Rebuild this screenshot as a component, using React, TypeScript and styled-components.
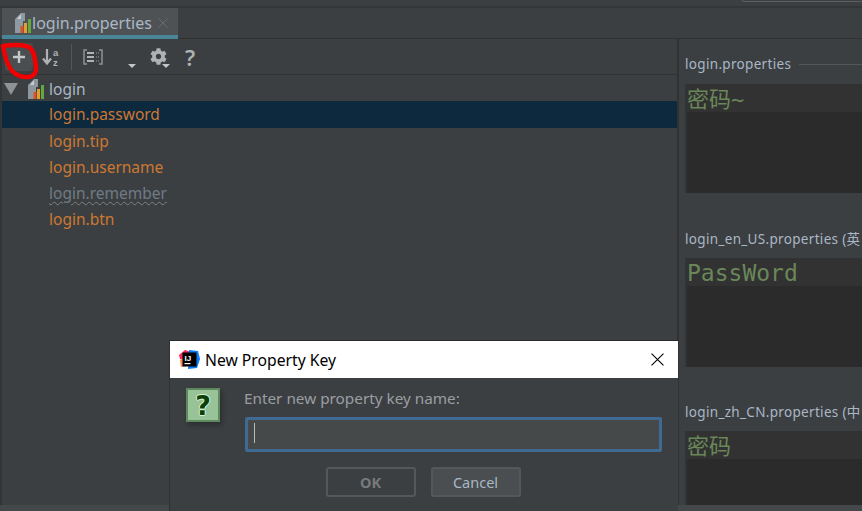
import React from "react";
import styled, { createGlobalStyle } from "styled-components";
import { FaCog } from "react-icons/fa";

const uiFont = `"Noto Sans", "Noto Sans CJK SC", sans-serif`;

const GlobalStyle = createGlobalStyle`
  html, body {
    margin: 0;
    padding: 0;
    background: #3c3f41;
  }
  * {
    box-sizing: border-box;
  }
`;

const Screen = styled.div`
  position: relative;
  width: 862px;
  height: 511px;
  overflow: hidden;
  display: flex;
  flex-direction: column;
  background: #3c3f41;
  font-family: ${uiFont};
`;

// top strip + tabs
const TopBar = styled.div`
  height: 8px;
  flex: none;
  display: flex;
  justify-content: flex-end;
  border-bottom: 2px solid #343638;
`;

const SearchStub = styled.div`
  width: 120px;
  height: 2px;
  border-left: 1px solid #5e6060;
  border-bottom: 1px solid #5e6060;
  border-bottom-left-radius: 2px;
`;

const TabBar = styled.div`
  height: 31px;
  flex: none;
  display: flex;
  padding-left: 2px;
  border-bottom: 1px solid #323232;
`;

const Tab = styled.div`
  width: 176px;
  height: 31px;
  display: flex;
  align-items: center;
  padding: 3px 8px 0 12px;
  background: #4e5254;
  border-bottom: 4px solid #4a8497;
  color: #a9b7c6;
  font-size: 16px;
`;

const TabClose = styled.svg<{ $left: number }>`
  margin-left: ${(p) => p.$left}px;
  flex: none;
`;

// main area
const Main = styled.div`
  flex: 1;
  min-height: 0;
  display: flex;
`;

const LeftPanel = styled.div`
  width: 679px;
  flex: none;
  padding-left: 2px;
  background: #323537;
  border-right: 2px solid #323232;
`;

const LeftInner = styled.div`
  height: 100%;
  background: #3c3f41;
`;

const Toolbar = styled.div`
  height: 36px;
  display: flex;
  align-items: center;
  padding-left: 3px;
  border-bottom: 1px solid #323232;
`;

const ToolButton = styled.div<{ $left?: number; $active?: boolean }>`
  position: relative;
  width: 28px;
  height: 28px;
  margin-left: ${(p) => p.$left ?? 0}px;
  display: flex;
  align-items: center;
  justify-content: center;
  border-radius: 4px;
  color: #afb1b3;
  background: ${(p) => (p.$active ? "#4a4e50" : "transparent")};
`;

const ToolSeparator = styled.div`
  width: 1px;
  height: 26px;
  margin-left: 5px;
  background: #515658;
`;

const SmallCaret = styled.div<{ $bare?: boolean }>`
  width: 0;
  height: 0;
  border-left: 4px solid transparent;
  border-right: 4px solid transparent;
  border-top: 4px solid #c4c6c8;
  ${(p) =>
    p.$bare
      ? `margin: 18px 0 0 21px;`
      : `position: absolute; right: 2px; bottom: 3px;`}
`;

const HelpMark = styled.span`
  font-size: 22px;
  font-weight: 600;
  line-height: 1;
  color: #afb1b3;
`;

const TreeRow = styled.div<{ $selected?: boolean }>`
  height: 26.25px;
  display: flex;
  align-items: center;
  padding-left: 47px;
  font-size: 15.5px;
  background: ${(p) => (p.$selected ? "#0d293e" : "transparent")};
`;

const RootRow = styled(TreeRow)`
  padding-left: 2px;
  padding-top: 1px;
`;

const Disclosure = styled.div`
  width: 0;
  height: 0;
  margin-right: 9px;
  border-left: 7.5px solid transparent;
  border-right: 7.5px solid transparent;
  border-top: 12px solid #8f9294;
`;

const RootLabel = styled.span`
  margin-left: 4px;
  color: #a9b7c6;
`;

const KeyLabel = styled.span<{ $unused?: boolean }>`
  color: ${(p) => (p.$unused ? "#6f7b85" : "#cc7832")};
  ${(p) =>
    p.$unused &&
    `text-decoration: underline wavy #808080 1px;
     text-underline-offset: 2px;`}
`;

const RightPanel = styled.div`
  flex: 1;
  min-width: 0;
  padding: 15px 0 0 6px;
  display: flex;
  flex-direction: column;
`;

const SectionLabel = styled.div<{ $top?: number; $after?: number }>`
  height: 20px;
  flex: none;
  margin-top: ${(p) => p.$top ?? 0}px;
  margin-bottom: ${(p) => p.$after ?? 10}px;
  display: flex;
  align-items: center;
  gap: 8px;
  font-size: 13.5px;
  letter-spacing: 0.32px;
  color: #a9b7c6;
  white-space: nowrap;
  overflow: hidden;
`;

const SectionRule = styled.div`
  flex: 1;
  height: 1px;
  background: #55585a;
`;

const Editor = styled.div<{ $fill?: boolean }>`
  height: ${(p) => (p.$fill ? "auto" : "109px")};
  flex: ${(p) => (p.$fill ? 1 : "none")};
  background: #2b2b2b;
  border-left: 2px solid #313335;
`;

const CaretLine = styled.div<{ $latin?: boolean }>`
  height: 28px;
  background: #323232;
  color: #6a8759;
  font-family: "DejaVu Sans Mono", "Noto Sans CJK SC", monospace;
  font-size: ${(p) => (p.$latin ? "23px" : "22px")};
  line-height: ${(p) => (p.$latin ? "30px" : "31px")};
  white-space: nowrap;
`;

const BottomStrip = styled.div`
  height: 6px;
  flex: none;
  background: #45484a;
`;

// dialog on top of everything
const Dialog = styled.div`
  position: absolute;
  left: 169px;
  top: 340px;
  width: 509px;
  height: 171px;
  display: flex;
  flex-direction: column;
  background: #3c3f41;
  border-top: 1px solid #2b2b2b;
  border-left: 1px solid #2f3132;
`;

const DialogTitleBar = styled.div`
  height: 37px;
  flex: none;
  display: flex;
  align-items: center;
  padding: 0 14px 0 9px;
  background: #ffffff;
`;

const DialogTitle = styled.span`
  margin-left: 5px;
  flex: 1;
  color: #000000;
  font-size: 15.7px;
`;

const DialogBody = styled.div`
  display: flex;
  padding: 10px 16px 0 16px;
`;

const QuestionBadge = styled.div`
  width: 34px;
  height: 34px;
  flex: none;
  display: flex;
  align-items: center;
  justify-content: center;
  background: #98c298;
  border: 2px solid #5f8a5f;
  box-shadow: 2px 3px 5px rgba(0, 0, 0, 0.3);
  color: #0b3f0b;
  font-family: "DejaVu Sans", sans-serif;
  font-size: 27px;
  font-weight: 700;
  line-height: 1;
  text-shadow: 1px 0 0 #d6f5d0, -1px 0 0 #d6f5d0, 0 1px 0 #d6f5d0, 0 -1px 0 #d6f5d0;
`;

const DialogContent = styled.div`
  flex: 1;
  margin-left: 25px;
`;

const PromptLabel = styled.div`
  height: 21px;
  margin-left: -1px;
  font-size: 15.3px;
  line-height: 21px;
  color: #9a9ea1;
`;

const KeyInput = styled.div`
  height: 35px;
  margin-top: 8px;
  padding: 3px 0 0 6px;
  background: #45494a;
  border: 3px solid #3f6a94;
  border-radius: 2px;
`;

const InputCaret = styled.div`
  width: 1px;
  height: 20px;
  background: #bbbbbb;
`;

const DialogFooter = styled.div`
  display: flex;
  justify-content: center;
  gap: 15px;
  margin-top: 15px;
  padding-right: 2px;
`;

const DialogButton = styled.div<{ $disabled?: boolean }>`
  width: 90px;
  height: 30px;
  display: flex;
  align-items: center;
  justify-content: center;
  border: 2px solid #55585a;
  border-radius: 3px;
  background: ${(p) => (p.$disabled ? "transparent" : "#4a4e50")};
  color: ${(p) => (p.$disabled ? "#777a7c" : "#a9b7c6")};
  font-size: 14.5px;
  font-weight: ${(p) => (p.$disabled ? 700 : 400)};
`;

const Annotation = styled.svg`
  position: absolute;
  left: 0;
  top: 40px;
  pointer-events: none;
`;

const PropertiesIcon = () => (
  <svg width="18" height="20" viewBox="0 0 18 20" style={{ flex: "none" }}>
    <path d="M7 0h4v8H9v12H1V6z" fill="#9aa7b0" opacity="0.85" />
    <path d="M3 6l4-5v5z" fill="#c5ced4" />
    <rect x="6.5" y="13" width="3" height="7" fill="#d9542b" />
    <rect x="10" y="10" width="3" height="10" fill="#e0a030" />
    <rect x="14" y="6" width="3" height="14" fill="#62a83c" />
  </svg>
);

const SortIcon = () => (
  <svg width="20" height="18" viewBox="0 0 20 18">
    <path d="M5 1v14M1 10.5l4 5 4-5" fill="none" stroke="#afb1b3" strokeWidth="2.2" />
    <text x="11" y="7.5" fontSize="9.5" fontWeight="700" fill="#afb1b3" fontFamily="Liberation Sans">a</text>
    <text x="11" y="17.5" fontSize="9.5" fontWeight="700" fill="#afb1b3" fontFamily="Liberation Sans">z</text>
  </svg>
);

const ExpandIcon = () => (
  <svg width="20" height="16" viewBox="0 0 20 16">
    <path d="M4 1H1v14h3M16 1h3v14h-3" fill="none" stroke="#8f9294" strokeWidth="1.5" />
    <path d="M4 4h7M4 8h7M4 12h7" stroke="#afb1b3" strokeWidth="2" />
    <path d="M13 4h3M13 8h3M13 12h3" stroke="#7a7d7f" strokeWidth="1.5" strokeDasharray="1 1" />
  </svg>
);

const PlusIcon = () => (
  <svg width="14" height="14" viewBox="0 0 14 14">
    <path d="M7 1v12M1 7h12" stroke="#c4c6c8" strokeWidth="2.4" />
  </svg>
);

const IdeaLogo = () => (
  <svg width="21" height="21" viewBox="0 0 21 21" style={{ flex: "none" }}>
    <path d="M0 6l6-5 6 2-6 8-5-1z" fill="#fe2857" />
    <path d="M1 11l4-2 2 8-5 1z" fill="#fe8a4a" />
    <path d="M10 1l9 1 2 8-3 9-9 1z" fill="#087cfa" />
    <rect x="3.5" y="3.5" width="14" height="14" fill="#000000" />
    <text x="5.5" y="11.5" fontSize="8" fontWeight="700" fill="#ffffff" fontFamily="Liberation Sans">IJ</text>
    <rect x="5.5" y="14" width="6" height="1.2" fill="#ffffff" />
  </svg>
);

const CloseX = ({ size, color, left = 0 }: { size: number; color: string; left?: number }) => (
  <TabClose $left={left} width={size} height={size} viewBox="0 0 12 12">
    <path d="M0.5 0.5l11 11M11.5 0.5l-11 11" stroke={color} strokeWidth="1" fill="none" />
  </TabClose>
);

const keys = [
  { name: "login.password", selected: true },
  { name: "login.tip" },
  { name: "login.username" },
  { name: "login.remember", unused: true },
  { name: "login.btn" },
];

export default function App() {
  return (
    <Screen>
      <GlobalStyle />
      <TopBar>
        <SearchStub />
      </TopBar>
      <TabBar>
        <Tab>
          <PropertiesIcon />
          login.properties
          <CloseX size={10} color="#6f7476" left={6} />
        </Tab>
      </TabBar>
      <Main>
        <LeftPanel>
          <LeftInner>
            <Toolbar>
              <ToolButton $active>
                <PlusIcon />
              </ToolButton>
              <ToolButton $left={5}>
                <SortIcon />
              </ToolButton>
              <ToolSeparator />
              <ToolButton $left={7}>
                <ExpandIcon />
              </ToolButton>
              <SmallCaret $bare />
              <ToolButton $left={8}>
                <FaCog size={17} />
                <SmallCaret />
              </ToolButton>
              <ToolButton $left={4}>
                <HelpMark>?</HelpMark>
              </ToolButton>
            </Toolbar>
            <RootRow>
              <Disclosure />
              <PropertiesIcon />
              <RootLabel>login</RootLabel>
            </RootRow>
            {keys.map((k) => (
              <TreeRow key={k.name} $selected={k.selected}>
                <KeyLabel $unused={k.unused}>{k.name}</KeyLabel>
              </TreeRow>
            ))}
          </LeftInner>
        </LeftPanel>
        <RightPanel>
          <SectionLabel>
            login.properties
            <SectionRule />
          </SectionLabel>
          <Editor>
            <CaretLine>密码~</CaretLine>
          </Editor>
          <SectionLabel $top={35}>login_en_US.properties (英</SectionLabel>
          <Editor>
            <CaretLine $latin>PassWord</CaretLine>
          </Editor>
          <SectionLabel $top={34} $after={10}>login_zh_CN.properties (中</SectionLabel>
          <Editor $fill>
            <CaretLine>密码</CaretLine>
          </Editor>
        </RightPanel>
      </Main>
      <BottomStrip />
      <Annotation width="42" height="42" viewBox="0 0 42 42">
        <path
          d="M3 6C10 5 20 5 26 6C31 7 34 12 35 20C36.5 28 37.5 34 31 36.5C25 38 18 36 13 32C8 27 5 18 3 6Z"
          fill="none"
          stroke="#f00000"
          strokeWidth="4.5"
          strokeLinejoin="round"
        />
      </Annotation>
      <Dialog>
        <DialogTitleBar>
          <IdeaLogo />
          <DialogTitle>New Property Key</DialogTitle>
          <CloseX size={13} color="#000000" />
        </DialogTitleBar>
        <DialogBody>
          <QuestionBadge>?</QuestionBadge>
          <DialogContent>
            <PromptLabel>Enter new property key name:</PromptLabel>
            <KeyInput>
              <InputCaret />
            </KeyInput>
          </DialogContent>
        </DialogBody>
        <DialogFooter>
          <DialogButton $disabled>OK</DialogButton>
          <DialogButton>Cancel</DialogButton>
        </DialogFooter>
      </Dialog>
    </Screen>
  );
}
